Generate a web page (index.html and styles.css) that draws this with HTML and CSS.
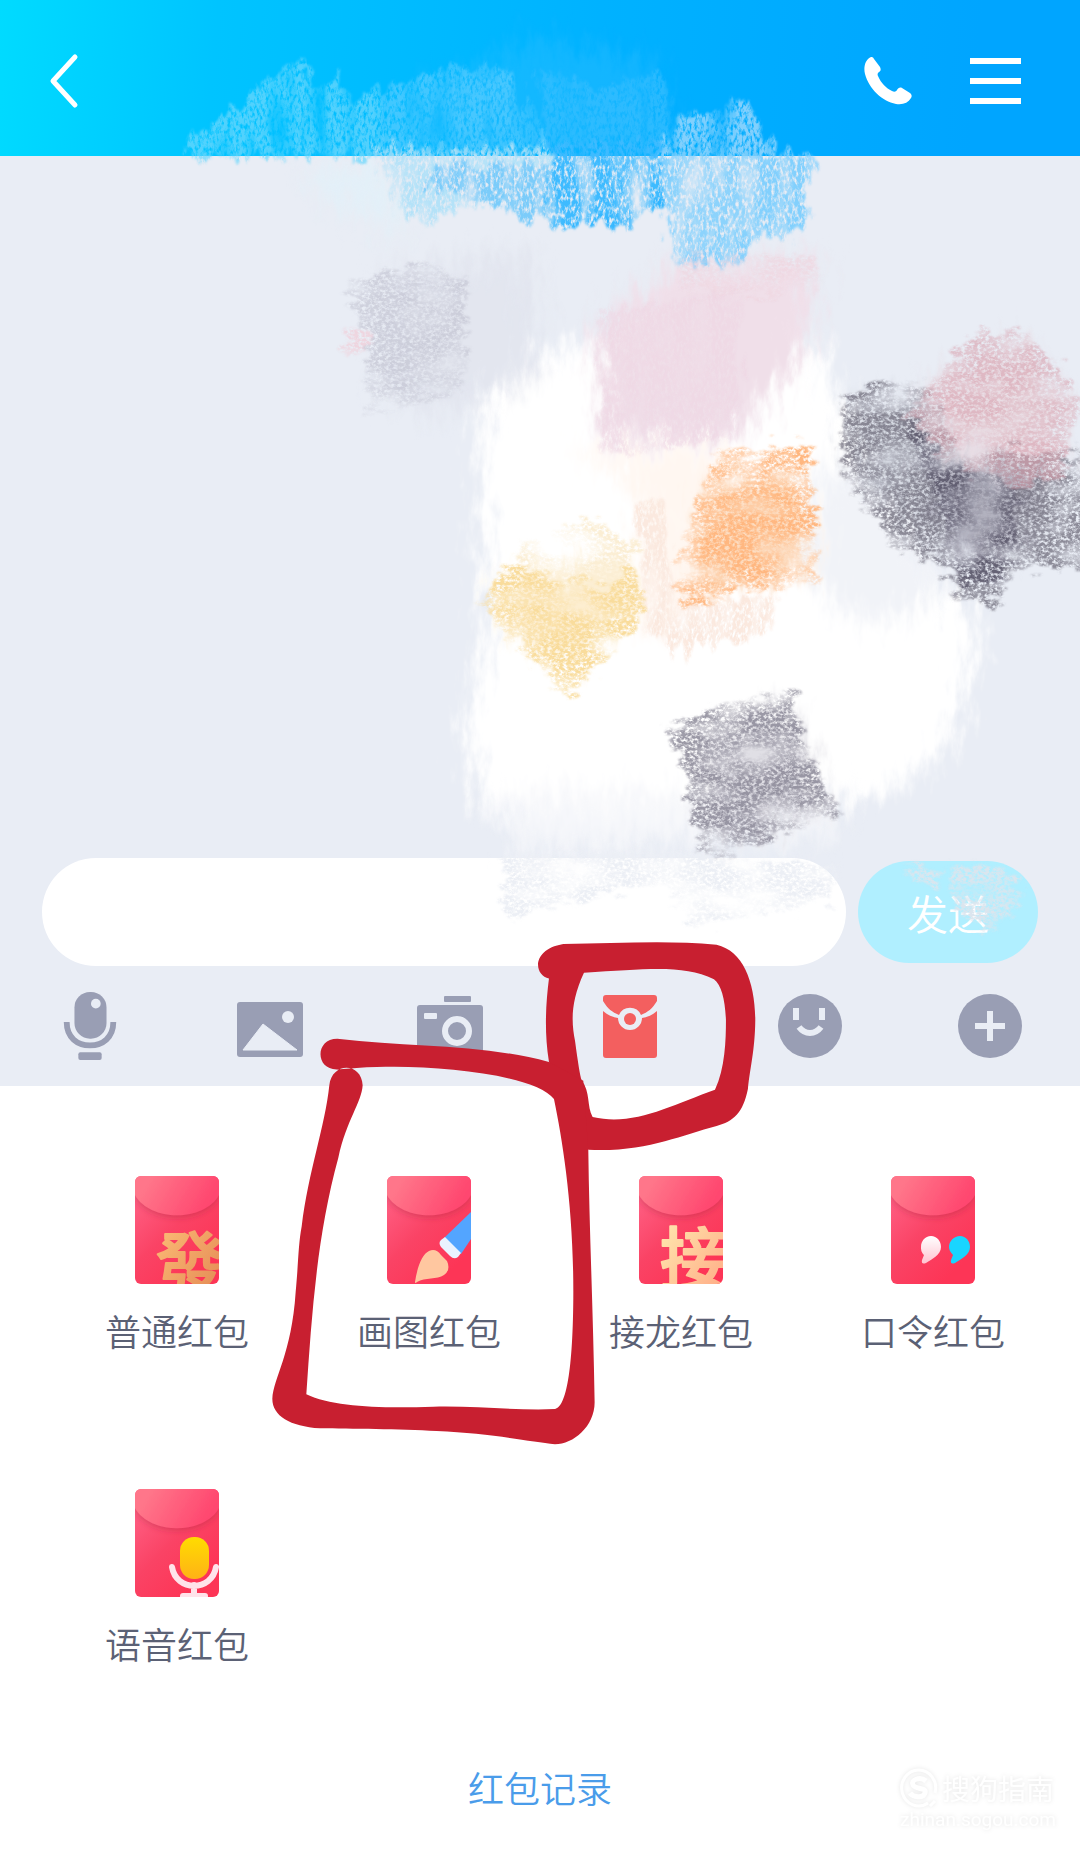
FILE: index.html
```html
<!DOCTYPE html>
<html lang="zh-CN">
<head>
  <meta charset="UTF-8" />
  <meta name="viewport" content="width=device-width, initial-scale=1" />
  <title>红包</title>
  <link rel="stylesheet" href="styles.css">
</head>
<body>
  <div class="page">
    <header class="topbar">
      <button class="icon-btn back" aria-label="返回">
        <svg width="30" height="56" viewBox="0 0 30 56"><path d="M26 4 4 28 26 52" fill="none" stroke="#fff" stroke-width="5" stroke-linecap="round" stroke-linejoin="round"/></svg>
      </button>
      <button class="icon-btn" aria-label="通话">
        <svg width="48" height="48" viewBox="0 0 48 48"><path d="M7 0C2 2-1 9 1 17c4 15 17 27 31 30 7 1 12-1 15-6 1-2 1-3-1-5l-8-5c-2-1-4 0-5 2-1 2-3 2-5 1-6-3-11-8-14-15-1-2 0-3 1-4 2-1 2-3 1-5L10 2C9 0 8 0 7 0Z" fill="#fff"/></svg>
      </button>
      <button class="icon-btn" aria-label="菜单">
        <svg width="51" height="46" viewBox="0 0 51 46"><path d="M0 3H51M0 23H51M0 43H51" stroke="#fff" stroke-width="6"/></svg>
      </button>
    </header>

    <main class="chat"></main>

    <form class="composer">
      <input class="message" type="text" aria-label="消息">
      <button class="send" type="button">发送</button>
    </form>

    <nav class="toolbar">
      <button class="icon-btn" aria-label="语音">
        <svg width="54" height="68" viewBox="0 0 54 70" fill="#999eb4"><rect x="11" y="0" width="33" height="48" rx="16"/><circle cx="33" cy="12" r="5" fill="#e9edf5"/><path d="M3 31C3 47 14 55 27 55S51 47 51 31" fill="none" stroke="#999eb4" stroke-width="6"/><rect x="15" y="62" width="24" height="8" rx="2"/></svg>
      </button>
      <button class="icon-btn low" aria-label="图片">
        <svg width="66" height="55" viewBox="0 0 66 55"><rect width="66" height="55" rx="3" fill="#999eb4"/><path d="M26 22 60 48H6Z" fill="#e9edf5" stroke="#e9edf5" stroke-linejoin="round"/><circle cx="51" cy="15" r="6" fill="#e9edf5"/></svg>
      </button>
      <button class="icon-btn" aria-label="拍照">
        <svg width="66" height="60" viewBox="0 0 66 60" fill="#999eb4"><rect x="27" width="27" height="6" rx="1"/><rect y="9" width="66" height="51" rx="3"/><rect x="7" y="17" width="13" height="6" rx="1" fill="#e9edf5"/><circle cx="40" cy="35" r="12" fill="none" stroke="#e9edf5" stroke-width="6"/></svg>
      </button>
      <button class="icon-btn" aria-label="红包">
        <svg width="54" height="63" viewBox="0 0 54 63"><path d="M3 0H51Q54 0 54 3V6C49 14 45 17 38 20A12 12 0 0 0 16 20C9 17 5 14 0 6V3Q0 0 3 0ZM0 16C5 20 9 22 15 23A12 12 0 0 0 39 23C45 22 49 20 54 16V60Q54 63 51 63H3Q0 63 0 60Z" fill="#f35f5f"/><circle cx="27" cy="24" r="6" fill="#f35f5f"/></svg>
      </button>
      <button class="icon-btn" aria-label="表情">
        <svg width="64" height="64" viewBox="0 0 64 64"><circle cx="32" cy="32" r="32" fill="#999eb4"/><path d="M18 14v12M44 14v12" stroke="#e9edf5" stroke-width="6"/><path d="M21 33C27 41 37 41 43 33" fill="none" stroke="#e9edf5" stroke-width="6"/></svg>
      </button>
      <button class="icon-btn" aria-label="更多">
        <svg width="64" height="64" viewBox="0 0 64 64"><circle cx="32" cy="32" r="32" fill="#999eb4"/><path d="M32 17V47M17 32H47" stroke="#e9edf5" stroke-width="6"/></svg>
      </button>
    </nav>

    <section class="panel">
      <div class="packets">
        <button class="packet">
          <svg class="envelope" viewBox="0 0 84 108">
            <defs>
              <linearGradient id="body" x1="0" y1="0.2" x2="0.6" y2="1"><stop offset="0" stop-color="#ff5f83"/><stop offset="0.5" stop-color="#fa4365"/><stop offset="1" stop-color="#fd3556"/></linearGradient>
              <linearGradient id="flap" x1="0" y1="0" x2="1" y2="0.3"><stop offset="0.2" stop-color="#ff768a"/><stop offset="1" stop-color="#ff476f"/></linearGradient>
              <linearGradient id="gold" x1="0" y1="0" x2="1" y2="1"><stop offset="0" stop-color="#ffc17a"/><stop offset="1" stop-color="#e0834f"/></linearGradient>
              <linearGradient id="cream" x1="0" y1="0" x2="1" y2="1"><stop offset="0" stop-color="#fff0b4"/><stop offset="1" stop-color="#ffa380"/></linearGradient>
              <linearGradient id="yellow" x1="0" y1="0" x2="0" y2="1"><stop offset="0" stop-color="#ffdc00"/><stop offset="1" stop-color="#ffb216"/></linearGradient>
              <linearGradient id="pale" x1="0" y1="0" x2="0" y2="1"><stop offset="0" stop-color="#fff"/><stop offset="1" stop-color="#ffc3d0"/></linearGradient>
              <filter id="flap-shadow" x="-20%" y="-20%" width="140%" height="150%"><feDropShadow dx="0" dy="2" stdDeviation="3" flood-color="#a8203f" flood-opacity="0.4"/></filter>
              <clipPath id="card"><rect width="84" height="108" rx="6"/></clipPath>
              <g id="blank"><rect width="84" height="108" fill="url(#body)"/><path d="M0-4H84V19C69 46 15 46 0 19Z" fill="url(#flap)" filter="url(#flap-shadow)"/></g>
            </defs>
            <g clip-path="url(#card)"><use href="#blank"/><text class="mark" x="21" y="113" font-size="68" fill="url(#gold)" stroke="url(#gold)">發</text></g>
          </svg>
          <span>普通红包</span>
        </button>
        <button class="packet">
          <svg class="envelope" viewBox="0 0 84 108">
            <g clip-path="url(#card)"><use href="#blank"/>
              <path d="M84 36 57 62 74 78 84 63Z" fill="#53a5ff"/>
              <path d="M58 61 74 77 71 81Q67 84 63 80L54 71Q51 67 54 64Z" fill="#eaf3ff"/>
              <path d="M28 106C30 92 35 78 42 75Q49 72 54 79L60 85Q64 94 57 99C50 104 38 101 30 106Q28 108 28 106Z" fill="#ffc7a0"/>
            </g>
          </svg>
          <span>画图红包</span>
        </button>
        <button class="packet">
          <svg class="envelope" viewBox="0 0 84 108">
            <g clip-path="url(#card)"><use href="#blank"/><text class="mark" x="21" y="108" font-size="68" fill="url(#cream)" stroke="url(#cream)">接</text></g>
          </svg>
          <span>接龙红包</span>
        </button>
        <button class="packet">
          <svg class="envelope" viewBox="0 0 84 108">
            <g clip-path="url(#card)"><use href="#blank"/>
              <path d="M40 60C46 60 50 65 50 71C50 79 41 83 35 87Q30 89 31 84L33 79C30 76 30 73 30 71C30 65 34 60 40 60Z" fill="url(#pale)"/>
              <path d="M69 60C75 60 79 65 79 71C79 79 70 83 64 87Q59 89 60 84L62 79C59 76 58 73 58 71C58 65 63 60 69 60Z" fill="#19d5ff"/>
            </g>
          </svg>
          <span>口令红包</span>
        </button>
        <button class="packet">
          <svg class="envelope" viewBox="0 0 84 108">
            <g clip-path="url(#card)"><use href="#blank"/>
              <rect x="45" y="48" width="29" height="42" rx="14" fill="url(#yellow)"/>
              <path d="M37 78C41 103 77 103 81 78M59 96V104M48 107H70" fill="none" stroke="#ffe3ea" stroke-width="6" stroke-linecap="round"/>
            </g>
          </svg>
          <span>语音红包</span>
        </button>
      </div>
      <a class="records" href="#">红包记录</a>
    </section>

    <!-- crayon strokes over the conversation -->
    <svg class="overlay" viewBox="0 0 913 1568" aria-hidden="true">
      <defs>
        <filter id="chalk" x="-5%" y="-5%" width="110%" height="110%" color-interpolation-filters="sRGB">
          <feTurbulence type="fractalNoise" baseFrequency="0.06 0.14" numOctaves="4" seed="4" result="wave"/>
          <feDisplacementMap in="SourceGraphic" in2="wave" scale="28" xChannelSelector="R" yChannelSelector="G" result="rough"/>
          <feGaussianBlur in="rough" stdDeviation="1" result="edge"/>
          <feTurbulence type="fractalNoise" baseFrequency="0.02 0.04" numOctaves="6" seed="9"/>
          <feColorMatrix values="0 0 0 0 0  0 0 0 0 0  0 0 0 0 0  0 0 0 2.4 -0.45" result="patch"/>
          <feTurbulence type="fractalNoise" baseFrequency="0.3 0.4" numOctaves="3" seed="3"/>
          <feColorMatrix values="0 0 0 0 0  0 0 0 0 0  0 0 0 0 0  0 0 0 3 -0.8" result="grain"/>
          <feComposite in="edge" in2="grain" operator="in" result="dusty"/>
          <feComposite in="dusty" in2="patch" operator="in"/>
        </filter>
        <filter id="chalk-down" x="-5%" y="-5%" width="110%" height="110%" color-interpolation-filters="sRGB">
          <feTurbulence type="fractalNoise" baseFrequency="0.14 0.04" numOctaves="4" seed="6" result="wave"/>
          <feDisplacementMap in="SourceGraphic" in2="wave" scale="26" xChannelSelector="R" yChannelSelector="G" result="rough"/>
          <feGaussianBlur in="rough" stdDeviation="1" result="edge"/>
          <feTurbulence type="fractalNoise" baseFrequency="0.06 0.015" numOctaves="5" seed="12"/>
          <feColorMatrix values="0 0 0 0 0  0 0 0 0 0  0 0 0 0 0  0 0 0 2 -0.15" result="patch"/>
          <feTurbulence type="fractalNoise" baseFrequency="0.4 0.2" numOctaves="3" seed="5"/>
          <feColorMatrix values="0 0 0 0 0  0 0 0 0 0  0 0 0 0 0  0 0 0 3 -0.7" result="grain"/>
          <feComposite in="edge" in2="grain" operator="in" result="dusty"/>
          <feComposite in="dusty" in2="patch" operator="in"/>
        </filter>
        <filter id="smudge" x="-10%" y="-10%" width="120%" height="120%" color-interpolation-filters="sRGB">
          <feGaussianBlur in="SourceGraphic" stdDeviation="9" result="soft"/>
          <feTurbulence type="fractalNoise" baseFrequency="0.12 0.04" numOctaves="4" seed="2" result="wave"/>
          <feDisplacementMap in="soft" in2="wave" scale="40" xChannelSelector="R" yChannelSelector="G"/>
        </filter>
      </defs>
      <g filter="url(#smudge)">
        <path d="M345 80 450 35 555 50 560 125 345 125Z" fill="#4cc5ff" opacity=".25"/>
        <path d="M255 140 325 140 345 200 280 170Z" fill="#dff2fa" opacity=".6"/>
        <path d="M430 310 480 292 690 290 720 360 725 440 800 490 828 535 805 630 750 670 650 695 500 700 412 690 392 630 410 540 405 350Z" fill="#fff"/>
        <path d="M410 670H720L700 710 440 725Z" fill="#f5f6fa" opacity=".8"/>
        <path d="M325 230 450 215 455 320 370 350 325 330Z" fill="#e0e3ed" opacity=".7"/>
        <path d="M570 225 690 220 680 300 620 370 510 370 505 275Z" fill="#f0dfe9"/>
        <path d="M485 380H620V410L585 430 590 520 545 535 540 410Z" fill="#fff7f1"/>
        <path d="M690 390 750 420 800 500 740 530 690 500Z" fill="#f1f3f8"/>
        <path d="M425 490 530 475 535 515 480 560 430 530Z" fill="#fdeccb" opacity=".9"/>
        <path d="M600 410 670 400 685 480 585 500Z" fill="#fdd9ba" opacity=".9"/>
        <path d="M720 340 780 340 820 400 820 460 770 440 720 390Z" fill="#c6c9d3" opacity=".6"/>
        <path d="M775 390 885 400 870 450 830 480 805 460Z" fill="#8e8b9b" opacity=".6"/>
        <path d="M780 330 860 290 900 340 890 400 800 385Z" fill="#e8d8e0" opacity=".8"/>
        <path d="M590 625 670 600 695 680 605 710Z" fill="#cbcad3" opacity=".6"/>
      </g>
      <g filter="url(#chalk-down)">
        <path d="M155 132 160 116 258 48 263 75 285 65 300 90 322 68 330 132Z" fill="#6cd7fc" opacity=".75"/>
        <path d="M322 132 325 75 370 55 430 60 470 132Z" fill="#62ceff" opacity=".65"/>
        <path d="M460 132 455 60 510 75 560 60 575 132Z" fill="#40bfff" opacity=".6"/>
        <path d="M316 125H470L475 190 410 172 345 190Z" fill="#b4e2f8"/>
        <path d="M364 140H470L471 190 362 156Z" fill="#7bccfa"/>
        <path d="M462 120H562L565 172 530 192 469 190Z" fill="#2fb5ff"/>
        <path d="M462 120H562L562 165 530 185 469 188Z" fill="#45bdff" opacity=".7"/>
        <path d="M555 132 575 100 629 85 655 125 687 132 682 197 635 202 626 223 570 223Z" fill="#82d0fd"/>
        <path d="M560 132H640L625 215 572 215Z" fill="#93d6fc" opacity=".6"/>
        <path d="M505 265 625 245 625 370 540 385 507 380Z" fill="#efd5e2" opacity=".6"/>
        <path d="M540 425 560 420 570 510 655 505 650 535 580 550 545 540Z" fill="#fbe9df"/>
      </g>
      <g filter="url(#chalk)">
        <path d="M289 240 355 222 395 240 390 330 315 350 310 280Z" fill="#b5b6c5" opacity=".5"/>
        <path d="M575 218H695L690 245 580 250ZM648 243 658 243 658 254 648 253Z" fill="#f0cfd9" opacity=".5"/>
        <path d="M292 272 314 280 312 300 292 302Z" fill="#eed5df"/>
        <path d="M403 505 435 475 530 465 545 525 480 588 440 550Z" fill="#f9dc9c"/>
        <path d="M440 460 500 440 540 460 520 500 440 480Z" fill="#fbeed4"/>
        <path d="M605 385 685 375 690 489 577 511 571 485 585 440Z" fill="#ffb780"/>
        <path d="M562 618 600 600 671 583 680 630 708 687 594 732 580 660Z" fill="#8a8796" opacity=".85"/>
        <path d="M712 333 780 320 810 380 920 385 920 478 855 482 845 510 815 508 800 480 755 460 710 395Z" fill="#6c6a78" opacity=".75"/>
        <path d="M765 355 800 385 860 405 860 450 843 495 810 495 800 440Z" fill="#5b586b" opacity=".8"/>
        <path d="M765 350 790 320 830 275 870 285 911 330 900 400 860 412 800 390Z" fill="#d9a5b1" opacity=".65"/>
        <path d="M423 725 560 718 707 735 705 762 585 782 560 745 430 776Z" fill="#eceff5"/>
        <path d="M760 733 800 733 785 748ZM805 730 850 735 868 755 833 790 808 765Z" fill="#dbe5ee"/>
      </g>
    </svg>

    <!-- hand-drawn red markers -->
    <svg class="overlay" viewBox="0 0 1080 1854" aria-hidden="true">
      <g transform="translate(250 920) scale(.3333 .3444)" fill="#c81f30" fill-rule="evenodd">
        <path d="M897 170C850 160 845 85 940 70C1100 68 1250 58 1400 72C1480 90 1515 180 1516 290C1515 380 1500 430 1494 490C1480 560 1450 585 1400 598C1290 625 1190 675 1015 667L897 412C882 320 888 240 897 170ZM1002 153C960 240 965 300 975 350C985 420 990 450 995 465C1022 500 1010 540 1028 572C1150 600 1260 540 1395 493C1425 430 1428 350 1428 290C1425 230 1415 190 1392 172C1300 130 1200 142 1002 153Z"/>
        <path d="M262 345C480 370 700 360 897 412L1000 467 1015 667C1018 900 1030 1150 1034 1400C1034 1470 970 1522 915 1522C840 1515 720 1490 560 1484C450 1478 300 1478 210 1476C120 1470 67 1440 67 1390C70 1330 125 1260 137 1080C145 1000 145 940 155 890C175 730 225 600 238 480C245 412 335 412 338 480C335 530 290 580 265 690C200 920 185 1150 169 1377C250 1415 400 1418 550 1413C680 1410 800 1425 915 1420C945 1415 968 1330 970 1100C972 850 940 650 912 520C860 450 560 420 380 427C340 427 300 432 260 434C195 434 195 345 262 345Z"/>
      </g>
    </svg>

    <div class="watermark">
      <svg width="38" height="40" viewBox="0 0 38 40" fill="none" stroke="#fff" stroke-width="3"><path d="M28 35A17 18 0 1 1 35 25M30 38 35 33"/><path d="M26 13C20 8 10 12 13 17S27 19 25 25 13 29 10 25" stroke-width="5"/></svg>
      <strong>搜狗指南</strong>
      <small>zhinan.sogou.com</small>
    </div>
  </div>
</body>
</html>
```
FILE: styles.css
```css
:root {
  --chat-bg: #e9edf5;
  --label: #5b6175;
  --link: #4a9cea;
}
* {
  box-sizing: border-box;
}
body {
  margin: 0;
  font-family: "Noto Sans CJK SC", "Noto Sans", sans-serif;
  background: #fff;
}
button {
  padding: 0;
  border: none;
  background: none;
  font: inherit;
  cursor: pointer;
}
svg {
  display: block;
}
.page {
  position: relative;
  display: flex;
  flex-direction: column;
  min-height: 100vh;
  overflow: hidden;
}
.topbar {
  display: flex;
  align-items: center;
  gap: 58px;
  height: 156px;
  padding: 6px 59px 0 49px;
  background: linear-gradient(95deg, #00dbff 0%, #00c4ff 20%, #00b2ff 55%, #00a5ff 90%);
}
.back {
  margin-right: auto;
}
.chat {
  flex: 1;
  min-height: 300px;
  background: var(--chat-bg);
}
.composer {
  display: flex;
  align-items: center;
  gap: 12px;
  padding: 0 42px;
  background: var(--chat-bg);
}
.message {
  flex: 1;
  min-width: 0;
  height: 108px;
  padding: 0 48px;
  border: none;
  border-radius: 54px;
  background: #fff;
  font: inherit;
  font-size: 41px;
}
.send {
  width: 180px;
  height: 102px;
  border-radius: 51px;
  background: #b0efff;
  color: #fff;
  font-size: 41px;
  font-weight: 350;
}
.toolbar {
  display: grid;
  grid-template-columns: repeat(6, 1fr);
  place-items: center;
  height: 120px;
  background: var(--chat-bg);
}
.low {
  padding-top: 6px;
}
.panel {
  padding: 90px 0 40px;
  text-align: center;
}
.packets {
  display: grid;
  grid-template-columns: repeat(4, 1fr);
  row-gap: 132px;
  padding: 0 21px 0 51px;
}
.packet {
  display: flex;
  flex-direction: column;
  align-items: center;
  gap: 19px;
  color: var(--label);
  font-size: 36px;
  line-height: 54px;
  font-weight: 350;
}
.envelope {
  width: 84px;
  height: 108px;
}
.mark {
  font-weight: 500;
  stroke-width: 2px;
  stroke-linejoin: round;
}
.records {
  display: inline-block;
  margin-top: 90px;
  color: var(--link);
  font-size: 36px;
  line-height: 54px;
  font-weight: 350;
  text-decoration: none;
}
.overlay {
  position: absolute;
  top: 0;
  left: 0;
  width: 100%;
  pointer-events: none;
}
.watermark {
  position: absolute;
  right: 24px;
  bottom: 22px;
  display: grid;
  grid-template-columns: auto auto;
  column-gap: 2px;
  align-items: center;
  color: #fff;
  filter: drop-shadow(0 0 2px rgba(0, 0, 0, 0.1));
}
.watermark strong {
  font-size: 28px;
  line-height: 40px;
  font-weight: 400;
}
.watermark small {
  grid-column: 1 / 3;
  font-family: Roboto, sans-serif;
  font-size: 19px;
  line-height: 24px;
}
```
